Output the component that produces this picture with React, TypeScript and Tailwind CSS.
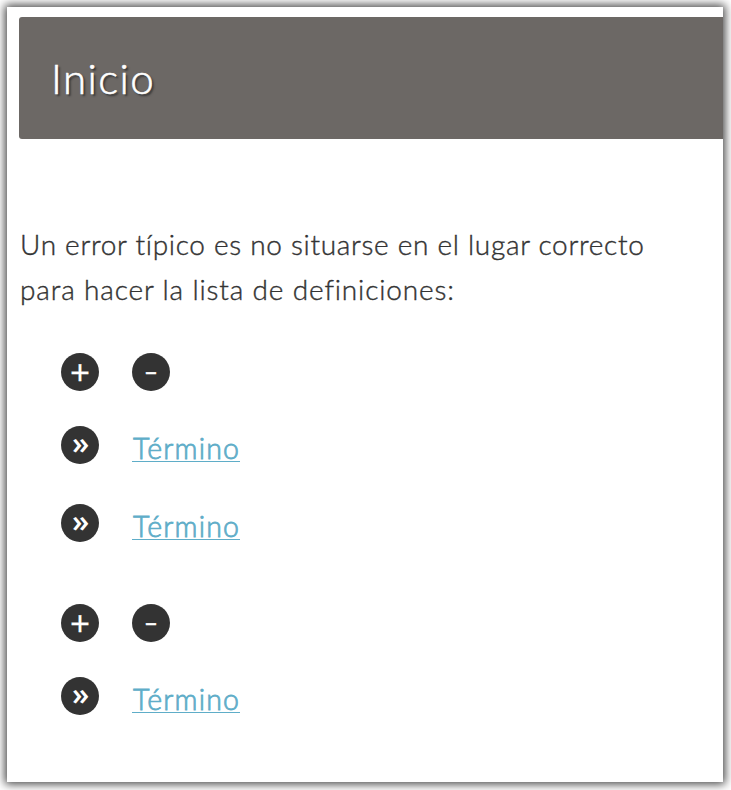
import React from "react";

function Bullet({ children, className = "" }: { children: React.ReactNode; className?: string }) {
  return (
    <span
      className={`flex h-[38px] w-[38px] shrink-0 items-center justify-center rounded-full bg-[#333333] text-white ${className}`}
    >
      {children}
    </span>
  );
}

function Toggles() {
  return (
    <div className="flex gap-[33px]">
      <Bullet>
        <span className="font-['Open_Sans',sans-serif] text-[35px] leading-[38px] [-webkit-text-stroke:0.3px_white]">+</span>
      </Bullet>
      <Bullet>
        <span className="pb-[7px] font-['Open_Sans',sans-serif] text-[40px] leading-[34px] font-light [-webkit-text-stroke:0.5px_white]">-</span>
      </Bullet>
    </div>
  );
}

function Term({ className = "" }: { className?: string }) {
  return (
    <div className={`flex gap-[33px] ${className}`}>
      <Bullet>
        <span className="pb-[7px] pl-px font-['Open_Sans',sans-serif] text-[31px] leading-[34px] font-semibold">»</span>
      </Bullet>
      <a
        href="#"
        className="mt-1 h-8 w-[108px] border-b border-[#5fadc8] pl-px font-[Lato,sans-serif] text-[28.5px] leading-[37px] font-light tracking-[1.2px] whitespace-nowrap text-[#5fadc8] [-webkit-text-stroke:0.8px_#5fadc8]"
      >
        Término
      </a>
    </div>
  );
}

export default function App() {
  return (
    <div className="h-[790px] w-[731px] overflow-hidden bg-white pt-[7px] pl-[7px]">
      <main className="h-[775px] w-[716px] bg-white pt-[10px] pl-3 shadow-[0_0_9px_2px_rgba(0,0,0,0.75)]">
        <header className="flex h-[122px] items-center rounded-l-[3px] bg-[#6c6865] pl-8">
          <h1 className="font-[Lato,sans-serif] text-[42px] leading-[50px] font-light tracking-[1.4px] text-white [-webkit-text-stroke:0.6px_white] [text-shadow:2px_2px_2px_#333]">
            Inicio
          </h1>
        </header>
        <p className="mt-[83px] pl-px font-[Lato,sans-serif] text-[28px] leading-[45px] font-light whitespace-nowrap text-[#333333] [-webkit-text-stroke:0.4px_#333333]">
          <span className="block tracking-[0.7px]">Un error típico es no situarse en el lugar correcto</span>
          <span className="block tracking-[0.85px]">para hacer la lista de definiciones:</span>
        </p>
        <section className="mt-[41px] pl-[42px]">
          <Toggles />
          <Term className="mt-[35px]" />
          <Term className="mt-10" />
        </section>
        <section className="mt-[62px] pl-[42px]">
          <Toggles />
          <Term className="mt-[35px]" />
        </section>
      </main>
    </div>
  );
}
